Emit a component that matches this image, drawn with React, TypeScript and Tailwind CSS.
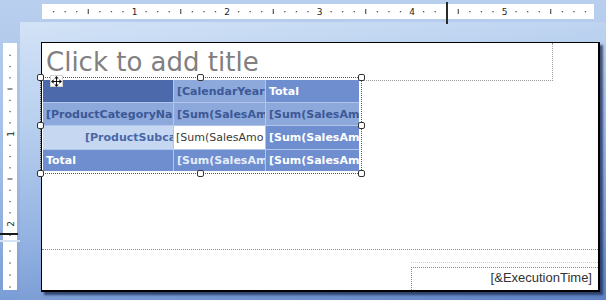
import React from "react";

function TopRuler() {
  const inch = 92.5;
  const items: React.ReactNode[] = [];
  for (let k = 1; k <= 47; k++) {
    const x = (k * inch) / 8;
    if (k % 8 === 0) {
      items.push(
        <text key={k} x={x} y={11} fontSize={9} textAnchor="middle" fill="#1e1e1e" fontFamily="DejaVu Sans, sans-serif">
          {k / 8}
        </text>
      );
    } else if (k % 4 === 0) {
      items.push(<rect key={k} x={x - 0.5} y={5} width={1} height={5} fill="#333" />);
    } else {
      items.push(<rect key={k} x={x - 0.6} y={7} width={1.3} height={1.3} fill="#555" />);
    }
  }
  return (
    <div className="relative ml-[42px] mt-[4px] h-[15px] w-[552px] bg-white">
      <svg width="552" height="15" className="block">
        {items}
      </svg>
      <div className="absolute left-[404px] top-[-2px] h-[22px] w-[2px] bg-[#2a2a2a]" />
    </div>
  );
}

function LeftRuler() {
  const step = 11.25;
  const items: React.ReactNode[] = [];
  for (let k = 1; k <= 17; k++) {
    const y = 1 + k * step;
    if (k % 8 === 0) {
      items.push(
        <text
          key={k}
          transform={`translate(7.5, ${y}) rotate(-90)`}
          fontSize={9}
          textAnchor="middle"
          dominantBaseline="central"
          fill="#1e1e1e"
          fontFamily="DejaVu Sans, sans-serif"
        >
          {k / 8}
        </text>
      );
    } else if (k % 4 === 0) {
      items.push(<rect key={k} x={4.5} y={y - 0.5} width={5} height={1} fill="#333" />);
    } else {
      items.push(<rect key={k} x={6.4} y={y - 0.6} width={1.3} height={1.3} fill="#555" />);
    }
  }
  const items2 = [9, 21, 33, 45].map((y) => (
    <rect key={y} x={6.4} y={y - 0.6} width={1.3} height={1.3} fill="#555" />
  ));
  return (
    <div className="relative flex w-[20px] flex-col pt-[24px]">
      <div className="ml-[3px] h-[197px] w-[14px] bg-white">
        <svg width="14" height="197" className="block">
          {items}
        </svg>
      </div>
      <div className="h-[2px] w-[20px] bg-[#d6e3f5]" />
      <div className="ml-[3px] h-[48px] w-[14px] bg-white">
        <svg width="14" height="48" className="block">
          {items2}
        </svg>
      </div>
      <div className="absolute left-0 top-[214px] h-[2px] w-[18px] bg-[#1a1a1a]" />
    </div>
  );
}

function Handle({ pos }: { pos: string }) {
  return <div className={`absolute h-[7px] w-[7px] rounded-[2px] border border-[#333] bg-white ${pos}`} />;
}

function MoveIcon() {
  return (
    <svg width="11" height="11" viewBox="0 0 11 11" className="block">
      <line x1="5.5" y1="1.5" x2="5.5" y2="9.5" stroke="#111" strokeWidth="1" />
      <line x1="1.5" y1="5.5" x2="9.5" y2="5.5" stroke="#111" strokeWidth="1" />
      <polygon points="5.5,0 3.3,2.6 7.7,2.6" fill="#111" />
      <polygon points="5.5,11 3.3,8.4 7.7,8.4" fill="#111" />
      <polygon points="0,5.5 2.6,3.3 2.6,7.7" fill="#111" />
      <polygon points="11,5.5 8.4,3.3 8.4,7.7" fill="#111" />
    </svg>
  );
}

function Matrix() {
  const base = "flex items-center overflow-hidden whitespace-nowrap text-[11px] leading-none";
  return (
    <div className="relative ml-[-2px] mt-[-4px] h-[97px] w-[322px] border border-dotted border-[#555] p-[2px]">
      <div className="grid h-[91px] w-[316px] grid-cols-[130px_91px_93px] grid-rows-[22px_22px_23px_21px] gap-px bg-[#b2c5ea] font-bold">
        <div className={`${base} bg-[#4c6aab]`} />
        <div className={`${base} bg-[#8da9db] pl-[3px] text-[#3c5896]`}>[CalendarYear</div>
        <div className={`${base} bg-[#6e8ecf] pl-[3px] text-white`}>Total</div>

        <div className={`${base} bg-[#8da9db] pl-[3px] text-[#3c5896]`}>[ProductCategoryNa</div>
        <div className={`${base} bg-[#8da9db] pl-[3px] text-[#3c5896]`}>[Sum(SalesAm</div>
        <div className={`${base} bg-[#8da9db] pl-[3px] text-[#3c5896]`}>[Sum(SalesAm</div>

        <div className={`${base} bg-[#c6d7f1] pl-[42px] text-[#4a67a7]`}>[ProductSubca</div>
        <div className={`${base} bg-white pl-[2px] text-[11.5px] font-normal text-[#3a3a3a]`}>[Sum(SalesAmo</div>
        <div className={`${base} bg-[#6e8ecf] pl-[3px] text-white`}>[Sum(SalesAm</div>

        <div className={`${base} bg-[#6e8ecf] pl-[3px] text-white`}>Total</div>
        <div className={`${base} bg-[#6e8ecf] pl-[3px] text-[#e6edf9]`}>[Sum(SalesAm</div>
        <div className={`${base} bg-[#6e8ecf] pl-[3px] text-white`}>[Sum(SalesAm</div>
      </div>
      <div className="absolute left-[9px] top-[-3px] flex h-[12px] w-[13px] items-center justify-center border border-[#d0d0d0] bg-white">
        <MoveIcon />
      </div>
      <Handle pos="left-[-4px] top-[-4px]" />
      <Handle pos="left-[156px] top-[-4px]" />
      <Handle pos="right-[-4px] top-[-4px]" />
      <Handle pos="left-[-4px] top-[44px]" />
      <Handle pos="right-[-4px] top-[44px]" />
      <Handle pos="left-[-4px] bottom-[-4px]" />
      <Handle pos="left-[156px] bottom-[-4px]" />
      <Handle pos="right-[-4px] bottom-[-4px]" />
    </div>
  );
}

function Page() {
  return (
    <div className="flex h-[250px] w-[559px] flex-col border-b-2 border-l border-r-2 border-t border-black bg-white shadow-[3px_3px_2px_rgba(25,40,80,0.75)]">
      <div className="h-[38px] w-[511px] border-b border-r border-dotted border-[#9a9a9a] pl-[4px] pt-[4px] text-[26px] leading-[30px] text-[#808080]">
        Click to add title
      </div>
      <Matrix />
      <div className="mt-[75px] border-t border-dotted border-[#8a8a8a]" />
      <div className="flex flex-1 flex-col items-end">
        <div className="mt-[12px] w-[187px] border-t border-dotted border-[#cfcfcf]" />
        <div
          className="mt-[4px] flex h-[23px] w-[187px] justify-end border-l border-t border-dotted border-[#8a8a8a] pr-[6px] pt-[2px] text-[13px] leading-[15px] text-[#333]"
          style={{ fontFamily: '"Liberation Sans", Arial, sans-serif' }}
        >
          [&amp;ExecutionTime]
        </div>
      </div>
    </div>
  );
}

export default function App() {
  return (
    <div
      className="flex h-[300px] w-[606px] flex-col overflow-hidden bg-[linear-gradient(180deg,#b9cfee_0%,#a2bde6_55%,#7b9dd6_100%)]"
      style={{ fontFamily: '"DejaVu Sans", Verdana, sans-serif' }}
    >
      <TopRuler />
      <div className="flex flex-1">
        <LeftRuler />
        <div className="mt-[3px] flex-1 bg-[linear-gradient(172deg,#d3e3f7_0%,#b7cfee_30%,#8eaee0_65%,#5d82c2_100%)] pl-[21px] pt-[20px]">
          <Page />
        </div>
      </div>
    </div>
  );
}
